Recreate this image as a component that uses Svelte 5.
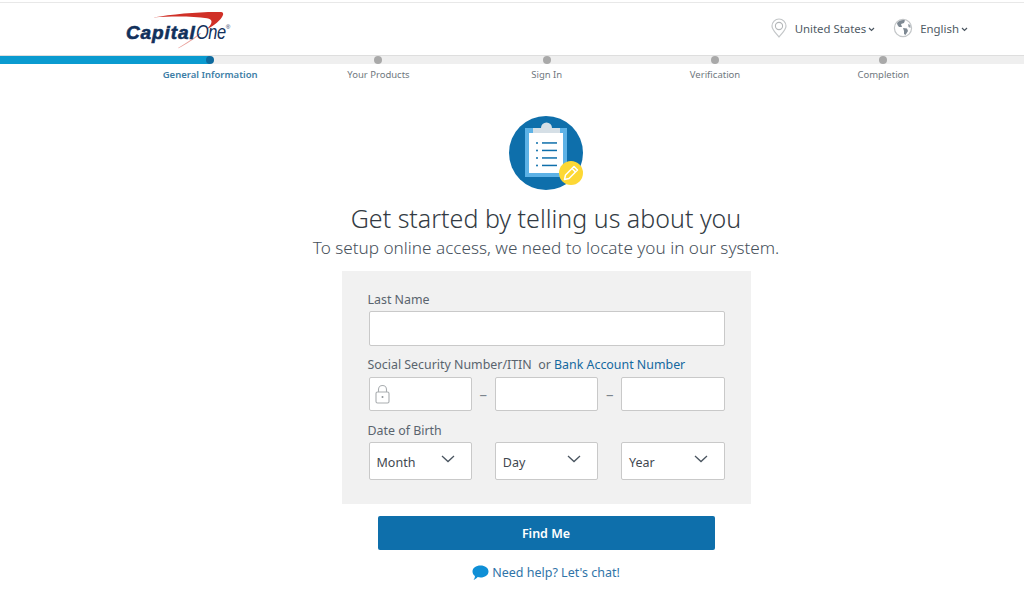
<script>
	const steps = [
		{ label: 'General Information', active: true },
		{ label: 'Your Products' },
		{ label: 'Sign In' },
		{ label: 'Verification' },
		{ label: 'Completion' }
	];
</script>

<div class="page">
	<header class="topbar">
		<div class="logo">
			<svg class="swoosh" viewBox="0 0 72 36" width="72" height="36" aria-hidden="true">
				<path d="M0 5.500 C20 2 48 -0.500 68 0 C70 0.200 70.500 1.500 70 3 C68 8 61 14 54 17 C60 11 60 7.500 54 6.300 C40 4 18 4 0 5.500 Z" fill="#d03027" />
				<path d="M25 36 C33 31 41 26 47 21 L48 21.500 C42 27 33 32 25.500 36.300 Z" fill="#e9a09b" />
			</svg>
			<span class="capital">Capital</span><span class="one">One</span><span class="reg">®</span>
		</div>
		<div class="locale">
			<div class="locale-item">
				<svg width="18" height="20" viewBox="0 0 18 20" aria-hidden="true">
					<path d="M9 19 C6 15 2 12 2 8 A7 7 0 0 1 16 8 C16 12 12 15 9 19 Z" fill="none" stroke="#c3c6c8" stroke-width="1.2" />
					<circle cx="9" cy="8" r="3.6" fill="none" stroke="#b4b7b9" stroke-width="1.1" />
				</svg>
				<span>United States</span>
				<svg class="caret" width="7" height="5" viewBox="0 0 7 5" aria-hidden="true"><path d="M1 1 L3.5 3.5 L6 1" fill="none" stroke="#4a5560" stroke-width="1.2" /></svg>
			</div>
			<div class="locale-item">
				<svg width="20" height="20" viewBox="0 0 20 20" aria-hidden="true">
					<circle cx="10" cy="10" r="8.6" fill="#fff" stroke="#c3c6c8" stroke-width="1.2" />
					<path d="M4 5 C6 2.5 10 1.5 12 2.5 L11 5 L8 6 L9 9 L6 9 L4.5 7 Z" fill="#7f8a94" />
					<path d="M10 10 L14 10.5 L15 13 L12.5 17 L11 16 L11 13 Z" fill="#7f8a94" />
					<path d="M15 6 L17.5 7 L17.5 10 L15.5 9 Z" fill="#98a1a9" />
				</svg>
				<span>English</span>
				<svg class="caret" width="7" height="5" viewBox="0 0 7 5" aria-hidden="true"><path d="M1 1 L3.5 3.5 L6 1" fill="none" stroke="#4a5560" stroke-width="1.2" /></svg>
			</div>
		</div>
	</header>

	<nav class="progress">
		<div class="track"><div class="fill"></div></div>
		<ol class="steps">
			{#each steps as step}
				<li class:active={step.active}>
					<i class="dot"></i>
					<span>{step.label}</span>
				</li>
			{/each}
		</ol>
	</nav>

	<main class="content">
		<svg class="hero" width="76" height="76" viewBox="0 0 76 76" aria-hidden="true">
			<circle cx="37" cy="37" r="37" fill="#0e6fab" />
			<rect x="16" y="12" width="42" height="49" fill="#5db2e6" />
			<rect x="20" y="17" width="34" height="40" fill="#fff" />
			<path d="M24 17 V12 H32 A5.500 5.500 0 0 1 43 12 H51 V17 Z" fill="#d5dfe6" />
			<g fill="#0e6fab">
				<circle cx="28" cy="27" r="1" />
				<circle cx="28" cy="34.500" r="1" />
				<circle cx="28" cy="42" r="1" />
				<circle cx="28" cy="49.500" r="1" />
				<rect x="33" y="26.200" width="15" height="1.500" />
				<rect x="33" y="33.700" width="15" height="1.500" />
				<rect x="33" y="41.200" width="15" height="1.500" />
				<rect x="33" y="48.700" width="15" height="1.500" />
			</g>
			<circle cx="62" cy="57" r="12" fill="#fdd835" />
			<path d="M55.500 63.500 L56.500 59 L65 50.500 L68.500 54 L60 62.500 Z" fill="none" stroke="#fff" stroke-width="1.500" stroke-linejoin="round" />
			<path d="M63 52.500 L66.500 56" stroke="#fff" stroke-width="1.500" />
		</svg>

		<h1>Get started by telling us about you</h1>
		<p class="sub">To setup online access, we need to locate you in our system.</p>

		<form class="card" on:submit|preventDefault>
			<label class="field-label" for="last-name">Last Name</label>
			<input id="last-name" class="box wide" type="text" />

			<div class="field-label second">Social Security Number/ITIN &nbsp;or <a href="#bank">Bank Account Number</a></div>
			<div class="triple">
				<div class="box lockbox">
					<svg width="15" height="20" viewBox="0 0 15 20" aria-hidden="true">
						<path d="M3.500 8 V5.500 A4 4 0 0 1 11.500 5.500 V8" fill="none" stroke="#a9adb0" stroke-width="1.1" />
						<rect x="1" y="8" width="13" height="11" rx="1.500" fill="none" stroke="#a9adb0" stroke-width="1.1" />
						<circle cx="7.500" cy="13" r="1" fill="#8f9498" />
					</svg>
				</div>
				<span class="dash">–</span>
				<div class="box"></div>
				<span class="dash">–</span>
				<div class="box"></div>
			</div>

			<div class="field-label third">Date of Birth</div>
			<div class="triple">
				<div class="box select"><span>Month</span><svg width="14" height="8" viewBox="0 0 14 8" aria-hidden="true"><path d="M1 1 L7 6.500 L13 1" fill="none" stroke="#4a5560" stroke-width="1.300" /></svg></div>
				<span class="dash"></span>
				<div class="box select"><span>Day</span><svg width="14" height="8" viewBox="0 0 14 8" aria-hidden="true"><path d="M1 1 L7 6.500 L13 1" fill="none" stroke="#4a5560" stroke-width="1.300" /></svg></div>
				<span class="dash"></span>
				<div class="box select"><span>Year</span><svg width="14" height="8" viewBox="0 0 14 8" aria-hidden="true"><path d="M1 1 L7 6.500 L13 1" fill="none" stroke="#4a5560" stroke-width="1.300" /></svg></div>
			</div>
		</form>

		<button class="find" type="button">Find Me</button>

		<a class="chat" href="#chat">
			<svg width="17" height="16" viewBox="0 0 17 16" aria-hidden="true">
				<path d="M8.500 0.500 C13 0.500 16.500 3 16.500 6.500 C16.500 10 13 12.500 8.500 12.500 C7.500 12.500 6.500 12.400 5.700 12.100 C4.500 13.500 3 14.500 1.500 15 C2.500 13.700 3 12.300 2.900 11 C1.300 9.800 0.500 8.200 0.500 6.500 C0.500 3 4 0.500 8.500 0.500 Z" fill="#0f8fd6" />
			</svg>
			Need help? Let's chat!
		</a>
	</main>
</div>

<style>
	:global(body) {
		margin: 0;
		background: #fff;
	}

	.page {
		width: 1024px;
		height: 609px;
		overflow: hidden;
		font-family: "Noto Sans", "Open Sans", sans-serif;
		color: #4f5a64;
	}

	.topbar {
		display: flex;
		justify-content: space-between;
		align-items: center;
		box-sizing: border-box;
		height: 54px;
		margin-top: 2px;
		border-top: 1px solid #e8e8e8;
		border-bottom: 1px solid #dedede;
		padding: 0 56px 0 126px;
	}

	.logo {
		position: relative;
		display: flex;
		align-items: baseline;
		align-self: flex-start;
		width: 104px;
		margin-top: 9px;
		padding-top: 9px;
		color: #11305b;
		font-family: "Liberation Sans", sans-serif;
		font-style: italic;
		line-height: 1;
	}

	.swoosh {
		position: absolute;
		left: 27px;
		top: 0;
		overflow: visible;
	}

	.capital {
		position: relative;
		font-size: 19px;
		font-weight: 700;
		letter-spacing: 0.9px;
		-webkit-text-stroke: 0.6px #11305b;
	}

	.one {
		position: relative;
		display: inline-block;
		font-size: 21px;
		letter-spacing: -0.5px;
		transform: scaleX(0.78);
		transform-origin: left bottom;
	}

	.reg {
		position: relative;
		top: -10px;
		font-size: 6px;
		margin-left: -8px;
	}

	.locale {
		display: flex;
		align-items: center;
		gap: 18px;
		font-size: 11.4px;
		margin-top: -2px;
	}

	.locale-item {
		display: flex;
		align-items: center;
		gap: 6px;
	}

	.locale-item svg:first-child {
		margin-right: 1px;
	}

	.caret {
		margin-left: -4px;
		margin-top: 2px;
	}

	.progress {
		position: relative;
	}

	.track {
		height: 8px;
		background: #efefef;
	}

	.fill {
		width: 210px;
		height: 100%;
		background: #0a9bd0;
	}

	.steps {
		position: absolute;
		top: 0;
		left: 126px;
		display: grid;
		grid-template-columns: repeat(5, 168.3px);
		margin: 0;
		padding: 0;
		list-style: none;
	}

	.steps li {
		display: flex;
		flex-direction: column;
		align-items: center;
		font-size: 9.5px;
		color: #6f7880;
	}

	.dot {
		width: 8px;
		height: 8px;
		border-radius: 50%;
		background: #a9a9a9;
		margin-bottom: 4px;
	}

	.steps li.active {
		color: #3d7ea6;
		font-weight: 600;
	}

	.steps li.active .dot {
		background: #0e6a9e;
	}

	.steps span {
		line-height: 14px;
	}

	.content {
		display: flex;
		flex-direction: column;
		align-items: center;
		padding: 52px 0 0 68px;
	}

	.hero {
		margin-left: 1px;
		margin-bottom: 9px;
	}

	h1 {
		margin: 0;
		font-size: 25px;
		font-weight: 300;
		line-height: 34px;
		color: #333b43;
	}

	.sub {
		margin: 0 0 10px;
		font-size: 17.15px;
		line-height: 26px;
		font-weight: 300;
		color: #47515b;
	}

	.card {
		box-sizing: border-box;
		width: 409px;
		height: 233px;
		padding: 21px 26px 0 27px;
		background: #f1f1f1;
		margin-bottom: 12px;
	}

	.field-label {
		display: block;
		font-size: 12.4px;
		line-height: 16px;
		color: #5a646e;
		margin-bottom: 3px;
		margin-left: -1px;
	}

	.field-label.second {
		margin-top: 11px;
		margin-bottom: 4px;
	}

	.field-label.third {
		margin-top: 12px;
		margin-bottom: 3px;
	}

	.field-label a {
		color: #14689f;
		text-decoration: none;
	}

	.box {
		box-sizing: border-box;
		display: flex;
		align-items: center;
		width: 104px;
		height: 34px;
		background: #fff;
		border: 1px solid #c9c9c9;
		border-radius: 2px;
	}

	.box.wide {
		width: 100%;
		height: 35px;
		padding: 0;
		margin: 0;
	}

	.triple {
		display: flex;
		align-items: center;
	}

	.dash {
		width: 23px;
		text-align: center;
		font-size: 15px;
		color: #7c858d;
	}

	.lockbox {
		padding-left: 5px;
	}

	.select {
		height: 38px;
		justify-content: space-between;
		padding: 0 16px 0 7px;
		font-size: 12.5px;
		color: #3f4850;
	}

	.select span {
		padding-top: 2px;
	}

	.select svg {
		margin-top: -4px;
	}

	.find {
		width: 337px;
		height: 34px;
		border: 0;
		border-radius: 2px;
		background: #0e6fab;
		color: #fff;
		font: 600 12.5px "Noto Sans", sans-serif;
		margin-bottom: 14px;
	}

	.chat {
		display: flex;
		align-items: center;
		gap: 3px;
		font-size: 12.5px;
		color: #2f74a8;
		text-decoration: none;
	}
</style>
